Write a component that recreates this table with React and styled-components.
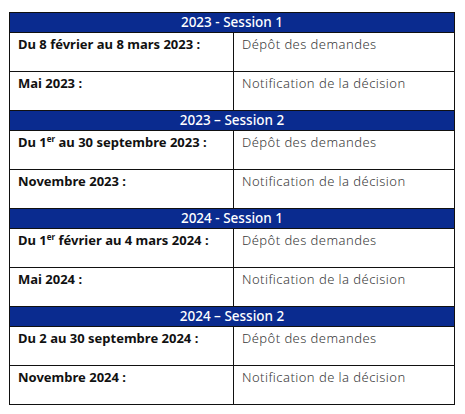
import React from "react";
import styled, { createGlobalStyle } from "styled-components";

const GlobalStyle = createGlobalStyle`
  html, body {
    margin: 0;
    padding: 0;
    background: #fff;
  }
  body {
    font-family: "Noto Sans", "Open Sans", sans-serif;
  }
`;

const Page = styled.div`
  padding: 12px 10px 10px 9px;
`;

const Table = styled.table`
  width: 446px;
  border-collapse: collapse;
  table-layout: fixed;
  font-size: 13px;
  line-height: 18px;
`;

const HeadCell = styled.th`
  height: 19px;
  padding: 0;
  background: #0a2b8f;
  color: #fff;
  font-size: 13.5px;
  font-weight: 500;
  line-height: 17px;
  text-align: center;
  border: 1px solid #111;
`;

const Cell = styled.td`
  height: 39px;
  padding: 2px 8px 0;
  vertical-align: top;
  border: 1px solid #111;
  box-sizing: border-box;
  color: ${(p) => (p.$bold ? "#111" : "#3a3a3a")};
  font-weight: ${(p) => (p.$bold ? 700 : 300)};
  letter-spacing: ${(p) => (p.$bold ? "0" : "0.45px")};
`;

const Sup = styled.sup`
  font-size: 8px;
  line-height: 0;
  vertical-align: 5px;
`;

const sessions = [
  {
    title: "2023 - Session 1",
    rows: [
      [<>Du 8 février au 8 mars 2023 :</>, "Dépôt des demandes"],
      [<>Mai 2023 :</>, "Notification de la décision"],
    ],
  },
  {
    title: "2023 – Session 2",
    rows: [
      [<>Du 1<Sup>er</Sup> au 30 septembre 2023 :</>, "Dépôt des demandes"],
      [<>Novembre 2023 :</>, "Notification de la décision"],
    ],
  },
  {
    title: "2024 - Session 1",
    rows: [
      [<>Du 1<Sup>er</Sup> février au 4 mars 2024 :</>, "Dépôt des demandes"],
      [<>Mai 2024 :</>, "Notification de la décision"],
    ],
  },
  {
    title: "2024 – Session 2",
    rows: [
      [<>Du 2 au 30 septembre 2024 :</>, "Dépôt des demandes"],
      [<>Novembre 2024 :</>, "Notification de la décision"],
    ],
  },
];

export default function App() {
  return (
    <Page>
      <GlobalStyle />
      <Table>
        <colgroup>
          <col style={{ width: 224 }} />
          <col />
        </colgroup>
        <tbody>
          {sessions.map((s) => (
            <React.Fragment key={s.title}>
              <tr>
                <HeadCell colSpan={2}>{s.title}</HeadCell>
              </tr>
              {s.rows.map(([when, what], i) => (
                <tr key={i}>
                  <Cell $bold>{when}</Cell>
                  <Cell>{what}</Cell>
                </tr>
              ))}
            </React.Fragment>
          ))}
        </tbody>
      </Table>
    </Page>
  );
}
